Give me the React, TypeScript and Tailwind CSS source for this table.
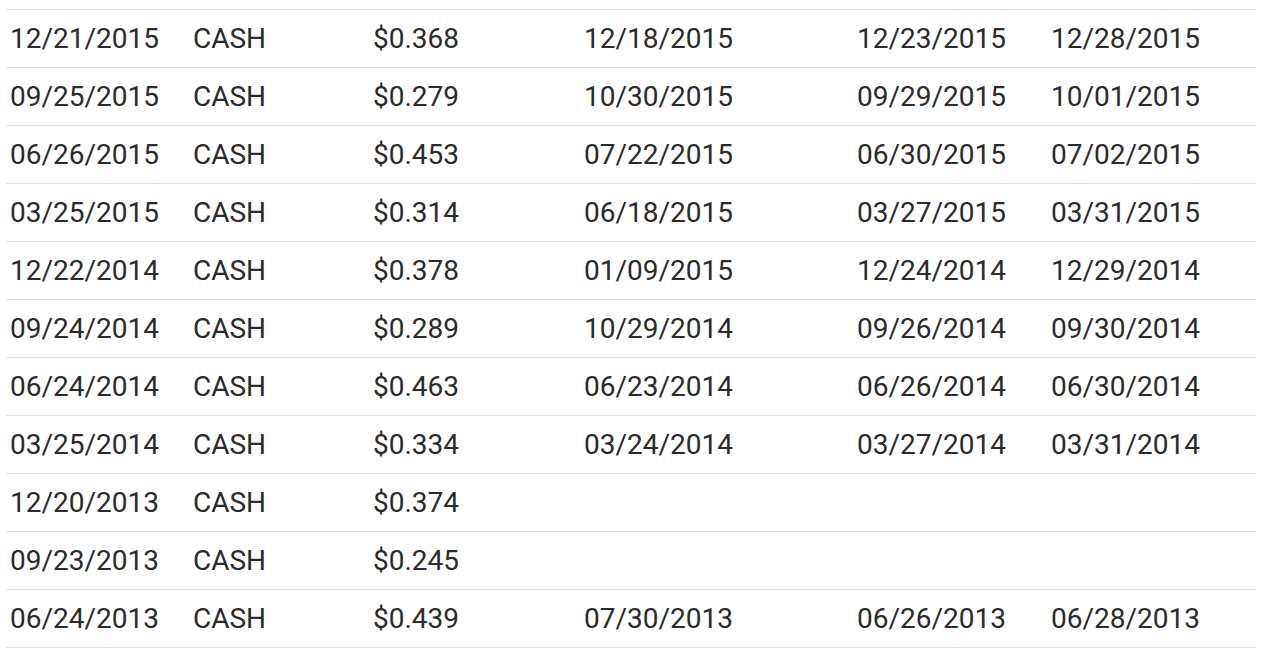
const rows = [
  ["12/21/2015", "CASH", "$0.368", "12/18/2015", "12/23/2015", "12/28/2015"],
  ["09/25/2015", "CASH", "$0.279", "10/30/2015", "09/29/2015", "10/01/2015"],
  ["06/26/2015", "CASH", "$0.453", "07/22/2015", "06/30/2015", "07/02/2015"],
  ["03/25/2015", "CASH", "$0.314", "06/18/2015", "03/27/2015", "03/31/2015"],
  ["12/22/2014", "CASH", "$0.378", "01/09/2015", "12/24/2014", "12/29/2014"],
  ["09/24/2014", "CASH", "$0.289", "10/29/2014", "09/26/2014", "09/30/2014"],
  ["06/24/2014", "CASH", "$0.463", "06/23/2014", "06/26/2014", "06/30/2014"],
  ["03/25/2014", "CASH", "$0.334", "03/24/2014", "03/27/2014", "03/31/2014"],
  ["12/20/2013", "CASH", "$0.374", "", "", ""],
  ["09/23/2013", "CASH", "$0.245", "", "", ""],
  ["06/24/2013", "CASH", "$0.439", "07/30/2013", "06/26/2013", "06/28/2013"],
];

const App = () => {
  return (
    <div className="w-[1264px] h-[656px] overflow-hidden bg-white pt-[9px] pl-[6px] pr-[8px] font-['Roboto',sans-serif] text-[28px] leading-none text-[#2b2b2b]">
      <div className="border-b border-[#e0e0e6]">
        {rows.map((r, i) => (
          <div
            key={i}
            className="grid grid-cols-[183px_180px_211px_273px_194px_1fr] items-center h-[58px] border-t border-[#e0e0e6] pl-[4px]"
          >
            {r.map((c, j) => (
              <span key={j} className="whitespace-nowrap">
                {c}
              </span>
            ))}
          </div>
        ))}
      </div>
    </div>
  );
};

export default App;
